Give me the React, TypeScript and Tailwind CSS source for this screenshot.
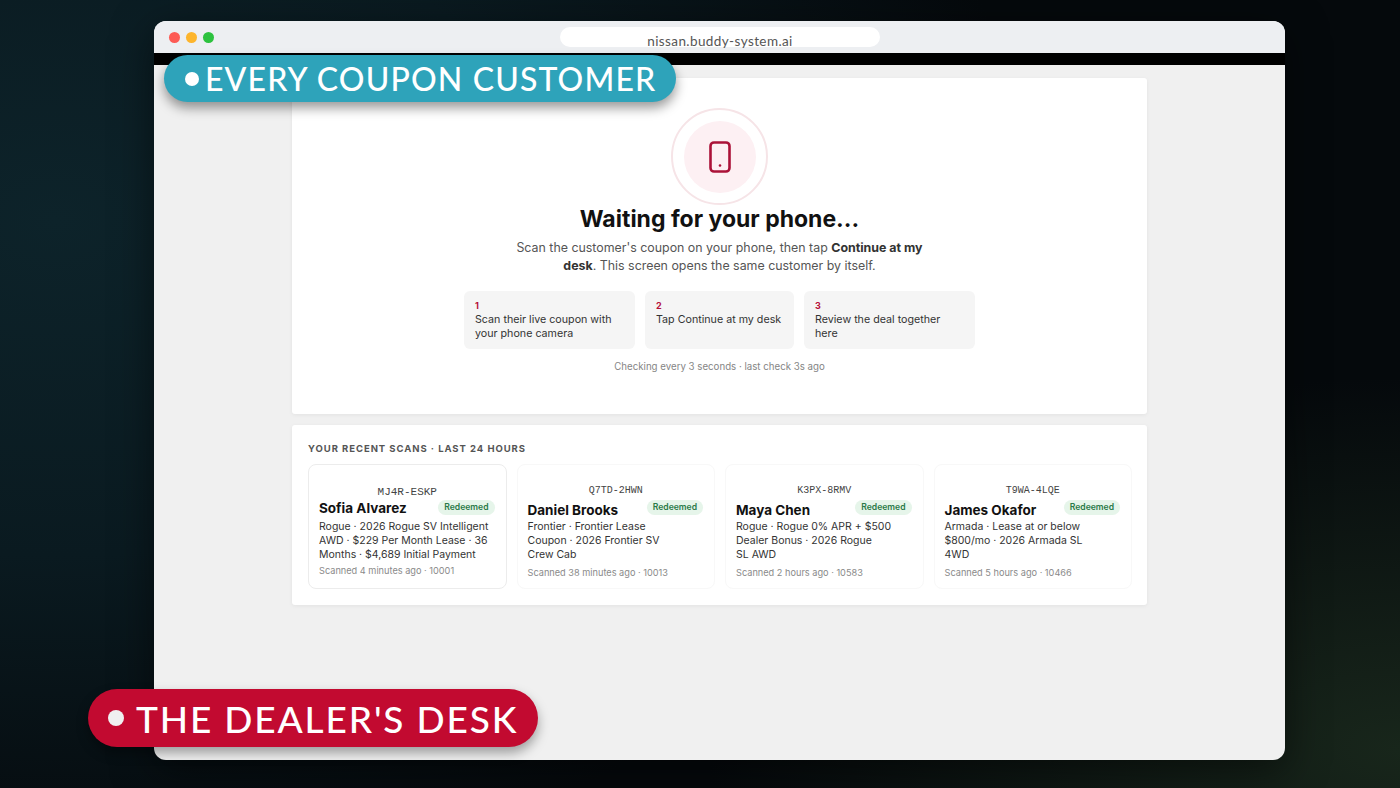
const scans = [
  {
    code: "MJ4R-ESKP",
    name: "Sofia Alvarez",
    lines: ["Rogue · 2026 Rogue SV Intelligent", "AWD · $229 Per Month Lease · 36", "Months · $4,689 Initial Payment"],
    meta: "Scanned 4 minutes ago · 10001",
    first: true,
  },
  {
    code: "Q7TD-2HWN",
    name: "Daniel Brooks",
    lines: ["Frontier · Frontier Lease", "Coupon · 2026 Frontier SV", "Crew Cab"],
    meta: "Scanned 38 minutes ago · 10013",
    first: false,
  },
  {
    code: "K3PX-8RMV",
    name: "Maya Chen",
    lines: ["Rogue · Rogue 0% APR + $500", "Dealer Bonus · 2026 Rogue", "SL AWD"],
    meta: "Scanned 2 hours ago · 10583",
    first: false,
  },
  {
    code: "T9WA-4LQE",
    name: "James Okafor",
    lines: ["Armada · Lease at or below", "$800/mo · 2026 Armada SL", "4WD"],
    meta: "Scanned 5 hours ago · 10466",
    first: false,
  },
];

const steps = [
  { n: "1", text: "Scan their live coupon with your phone camera", box: "w-[171px] pr-[11px]" },
  { n: "2", text: "Tap Continue at my desk", box: "w-[149px] pr-[6px]" },
  { n: "3", text: "Review the deal together here", box: "w-[171px] pr-[11px]" },
];

function ScanCard({ scan }: { scan: (typeof scans)[number] }) {
  return (
    <div className={`h-[125px] rounded-lg border bg-white px-[10px] pt-[20px] ${scan.first ? "border-[#ececec]" : "border-[#f8f8f8]"}`}>
      <div
        className={`text-center font-['Liberation_Mono',monospace] leading-[12px] text-[#444] ${
          scan.first ? "translate-y-[1px] text-[11px]" : "text-[10px]"
        }`}
      >
        {scan.code}
      </div>
      <div className="mt-[1px] flex h-[22px] items-start justify-between">
        <span className={`text-[13.5px] leading-[18px] font-bold text-[#111] ${scan.first ? "mt-[1px]" : "mt-[3px]"}`}>
          {scan.name}
        </span>
        <span className="mt-[2px] mr-[1px] rounded-full bg-[#e6f5ea] px-[6px] py-[2px] text-[8.6px] leading-[11px] font-semibold text-[#2a7a48]">
          Redeemed
        </span>
      </div>
      <div className="text-[10.5px] leading-[14px] text-[#333]">
        {scan.lines.map((line) => (
          <div key={line}>{line}</div>
        ))}
      </div>
      <p className={`text-[9.2px] leading-[14px] text-[#8a8a8a] ${scan.first ? "mt-[2px]" : "mt-[4px]"}`}>{scan.meta}</p>
    </div>
  );
}

export default function App() {
  return (
    <div className="relative h-[788px] w-[1400px] overflow-hidden bg-[radial-gradient(ellipse_70%_85%_at_4%_28%,#0d232a_0%,#0a1a20_50%,#05090c_100%)] font-['Inter',sans-serif]">
      <div className="pointer-events-none absolute inset-0 bg-[radial-gradient(ellipse_at_100%_95%,#18261b_0%,transparent_35%)]" />
      <div className="relative ml-[154px] mt-[21px] flex h-[739px] w-[1131px] flex-col overflow-hidden rounded-xl bg-[#f0f0f0] shadow-[0_10px_40px_rgba(0,0,0,0.5)]">
        {/* Browser chrome */}
        <div className="relative flex h-[32px] shrink-0 items-center bg-[#edeff2] pl-[15px]">
          <div className="flex gap-[6px]">
            <span className="h-[11px] w-[11px] rounded-full bg-[#fd5b55]" />
            <span className="h-[11px] w-[11px] rounded-full bg-[#fdb52d]" />
            <span className="h-[11px] w-[11px] rounded-full bg-[#2dc23f]" />
          </div>
          <div className="absolute left-[406px] top-[6px] flex h-[20px] w-[320px] justify-center rounded-[10px] bg-white">
            <span className="translate-y-[4px] font-['Lato',sans-serif] text-[13.5px] leading-[20px] tracking-[0.4px] text-[#555]">
              nissan.buddy-system.ai
            </span>
          </div>
        </div>
        <div className="h-[12px] shrink-0 bg-black" />

        {/* Page */}
        <div className="flex flex-col gap-[11px] pl-[138px] pt-[13px]">
          <div className="flex h-[336px] w-[855px] flex-col items-center rounded-[3px] bg-white pt-[30px] shadow-[0_1px_4px_rgba(0,0,0,0.06)]">
            <div className="flex h-[97px] w-[97px] items-center justify-center rounded-full border-2 border-[#f6e4e7]">
              <div className="flex h-[72px] w-[72px] items-center justify-center rounded-full bg-[#fdf0f3]">
                <svg width="24" height="34" viewBox="0 0 24 34" fill="none">
                  <rect x="2.5" y="2.5" width="19" height="29" rx="3.5" stroke="#ab1238" strokeWidth="2.6" />
                  <circle cx="12" cy="25.5" r="1.3" fill="#ab1238" />
                </svg>
              </div>
            </div>
            <h1 className="-mt-px text-[23px] leading-[30px] font-bold text-[#111]">Waiting for your phone...</h1>
            <p className="mt-[5px] w-[420px] text-center text-[12.4px] leading-[18px] text-[#555]">
              Scan the customer's coupon on your phone, then tap <strong className="font-bold text-[#333]">Continue at my desk</strong>. This screen opens the same customer by itself.
            </p>
            <div className="mt-[16px] flex gap-[10px]">
              {steps.map((step) => (
                <div key={step.n} className={`h-[58px] rounded-md bg-[#f5f5f5] pl-[11px] pt-[9px] ${step.box}`}>
                  <div className="text-[9px] leading-[12px] font-bold text-[#b5103a]">{step.n}</div>
                  <div className="mt-px text-[10.7px] leading-[14px] text-[#333]">{step.text}</div>
                </div>
              ))}
            </div>
            <p className="mt-[11px] text-[9.7px] leading-[14px] text-[#858585]">Checking every 3 seconds · last check 3s ago</p>
          </div>

          <div className="h-[180px] w-[855px] rounded-[3px] bg-white pl-[16px] pr-[15px] pt-[17px] shadow-[0_1px_4px_rgba(0,0,0,0.06)]">
            <h2 className="text-[9.5px] leading-[14px] font-bold tracking-[0.95px] text-[#555]">YOUR RECENT SCANS · LAST 24 HOURS</h2>
            <div className="mt-[8px] grid grid-cols-4 gap-[10px]">
              {scans.map((scan) => (
                <ScanCard key={scan.code} scan={scan} />
              ))}
            </div>
          </div>
        </div>
      </div>

      {/* Video captions */}
      <div className="absolute left-[164px] top-[55px] flex h-[47px] w-[512px] items-center rounded-[24px] bg-[#2ea3ba] pl-[21px] font-['Lato',sans-serif] text-[32px] leading-none font-medium tracking-[1.15px] text-white shadow-[0_6px_12px_rgba(0,0,0,0.4)]">
        <span className="mr-[6px] h-[14px] w-[14px] rounded-full bg-white" />
        EVERY COUPON CUSTOMER
      </div>
      <div className="absolute left-[88px] top-[689px] flex h-[58px] w-[450px] items-center rounded-[29px] bg-[#c20a30] pl-[20px] font-['Lato',sans-serif] text-[37px] leading-none font-medium tracking-[1.85px] text-white shadow-[0_6px_12px_rgba(0,0,0,0.35)]">
        <span className="mr-[12px] h-[16px] w-[16px] rounded-full bg-[#f0f0f0]" />
        THE DEALER'S DESK
      </div>
    </div>
  );
}
